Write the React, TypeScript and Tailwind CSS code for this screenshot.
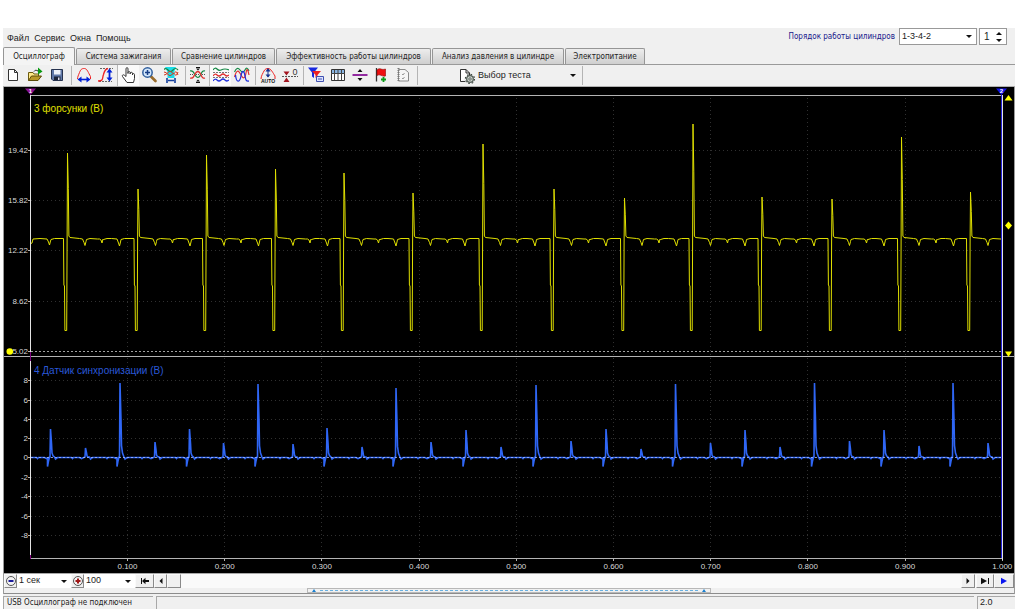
import React from "react";

const SANS = "font-['Liberation_Sans',Arial,sans-serif]";

/* ---------- traces ---------- */

const injectorPulses: [number, number][] = [
  [67.5, 153], [138, 189], [206.5, 155], [275.5, 169], [344, 173], [413, 193], [483, 144],
  [554, 189], [624.5, 198], [693, 124], [762, 197], [832, 199], [901.5, 137], [970.5, 192],
];

const syncPeaks: [number, number][] = [
  [50.5, 429], [85.5, 448], [120, 383], [155, 442], [189.5, 429], [223.5, 443], [258, 384],
  [293, 444], [327, 428], [362, 447], [396, 388], [431, 442], [466, 430], [501, 447],
  [536, 385], [571, 441], [606, 429], [641, 449], [675.5, 384], [710.5, 443], [745, 430],
  [780, 447], [814.5, 383], [849.5, 441], [884, 430], [919, 446], [953, 383], [988, 443],
];

function dip(x: number, y: number) {
  return `L${x - 2.5} 239 L${x - 1} ${y - 3} L${x} ${y} L${x + 1} ${y - 4} L${x + 1.5} 239.5 L${x + 5} 238.5`;
}

function injectorPath() {
  let d = "M31 243.5 L32 243 L33 239 L40 238.5 " + dip(49.5, 245);
  for (const [x, top] of injectorPulses) {
    const mid = top + (238 - top) * 0.42;
    d += ` L${x - 4} 238.5 L${x - 3.6} 285 L${x - 3} 286 L${x - 2.6} 330.5 L${x - 0.8} 330.5`;
    d += ` L${x - 0.4} 242 L${x} ${top} L${x + 0.8} ${mid} L${x + 1.4} 236 L${x + 2.5} 237.5 L${x + 12} 238.5`;
    d += dip(x + 17.5, 245.5);
    if (x < 960) d += `L${x + 30} 239` + dip(x + 34.5, 243) + `L${x + 44} 238.5` + dip(x + 52, 246);
  }
  return d + " L1001 239";
}

function syncPath() {
  let d = "M31 457.5";
  syncPeaks.forEach(([x, top]) => {
    const h = 457.5 - top;
    d += ` L${x - 14} 457.5 L${x - 13} 458.5 L${x - 12} 457.5 L${x - 6} 457.5 L${x - 4} 458.5`;
    if (h > 20) d += ` L${x - 3} 458 L${x - 3} 466.5 L${x - 2} 461 L${x - 1} 457`;
    d += ` L${x - 0.5} 457 L${x} ${top} L${x + 1} ${top + h * 0.5} L${x + 1.5} ${top + h * 0.84} L${x + 2.5} ${top + h * 0.94}`;
    d += ` L${x + 4} 457 L${x + 5} 459 L${x + 7} 457.5`;
  });
  return d + " L1001 457.5";
}

const voltTicks: [number, string][] = [[150, "19.42"], [200.5, "15.82"], [250.5, "12.22"], [301, "8.62"], [351.5, "5.02"]];
const syncTicks: [number, string][] = [
  [380.5, "8"], [400, "6"], [419, "4"], [438.5, "2"], [457.5, "0"], [477, "-2"], [496, "-4"], [516, "-6"], [535, "-8"],
];
const timeTicks = Array.from({ length: 10 }, (_, i) => ({ x: 127.5 + i * 97.2, label: ((i + 1) / 10).toFixed(3) }));

function Scope() {
  return (
    <svg viewBox="4 87 1010 486" className={`block h-auto w-full bg-black ${SANS}`} role="img" aria-label="Осциллограмма">
      <g stroke="#303030" strokeWidth="1" strokeDasharray="1 3" shapeRendering="crispEdges">
        {timeTicks.slice(0, 9).map((t) => (
          <path key={t.label} d={`M${t.x} 98V558`} />
        ))}
        {[...voltTicks.slice(0, 4), ...syncTicks].map(([y, l]) => (
          <path key={l} d={`M31 ${y}H1000`} />
        ))}
      </g>
      <path d="M31 351.5H1001" stroke="#a0a0a0" strokeDasharray="2 2" shapeRendering="crispEdges" />
      <g fill="#d8d8d8" fontSize="8" textAnchor="end">
        {[...voltTicks, ...syncTicks].map(([y, l]) => (
          <text key={l} x="28" y={Math.floor(y) + 3}>{l}</text>
        ))}
      </g>
      <g fill="#d8d8d8" fontSize="8" textAnchor="middle">
        {timeTicks.map((t) => (
          <text key={t.label} x={t.x} y="569">{t.label}</text>
        ))}
      </g>
      <g stroke="#b4b4b4" shapeRendering="crispEdges">
        {[...voltTicks, ...syncTicks].map(([y, l]) => (
          <path key={l} d={`M28 ${y}H31`} />
        ))}
        {timeTicks.map((t) => (
          <path key={t.label} d={`M${t.x} 558V561`} />
        ))}
        <path d="M31 95.5H1002M4 356.5H1014M31 558.5H1002" />
        <path d="M30.5 95V559M1002.5 95V560" stroke="#e4e4e4" />
      </g>
      <path d="M1001.5 95V558" stroke="#2020d8" shapeRendering="crispEdges" />
      <path d="M30.5 352V361M30.5 555V559" stroke="#80007f" shapeRendering="crispEdges" />
      <path d={injectorPath()} fill="none" stroke="#e0e000" strokeWidth="1" />
      <path d={syncPath()} fill="none" stroke="#2f66f5" strokeWidth="1.6" />
      <path d="M31 457.5H1001" stroke="#b8c8ff" strokeWidth="1" strokeDasharray="2 2" opacity=".7" shapeRendering="crispEdges" />
      <path d="M25 88.500H36L30.500 95Z" fill="#8a1090" />
      <path d="M996 88.500H1007L1001.500 95Z" fill="#1414e8" />
      <text x="30.500" y="93" fontSize="6" fontWeight="700" fill="#fff" textAnchor="middle">1</text>
      <text x="1001.500" y="93" fontSize="6" fontWeight="700" fill="#fff" textAnchor="middle">2</text>
      <g fill="#ffff00">
        <path d="M1008.500 95L1012.500 100.500H1004.500Z" />
        <path d="M1008.500 221.500L1012 225.500L1008.500 229.500L1005 225.500Z" />
        <path d="M1005 351.500H1012L1008.500 357Z" />
        <circle cx="9.800" cy="351.500" r="3.300" />
      </g>
      <text x="34" y="112" fontSize="10" fill="#e0e000">3 форсунки (В)</text>
      <text x="34" y="374" fontSize="10" fill="#2a58d8">4 Датчик синхронизации (В)</text>
    </svg>
  );
}

/* ---------- toolbar icons, drawn on a 16 x 16 grid ---------- */

const icons: Record<string, React.ReactNode> = {
  new: <path d="M2.500 2.500H8.500L11.500 5.500V13.500H2.500ZM8.500 2.500V5.500H11.500" fill="#fff" stroke="#333" />,
  open: (
    <>
      <path d="M0.500 13.500V5.500H5L6 7H10.500V9" fill="#ffe98a" stroke="#6b5a10" />
      <path d="M0.500 13.500L3.500 9H13.500L10 13.500Z" fill="#b89828" stroke="#5a4a08" />
      <path d="M6 4.500C7 3 8 3 10 4" stroke="#222" fill="none" />
      <path d="M10 0.500L14.500 4.500L10 7.500Z" fill="#079a10" />
    </>
  ),
  save: (
    <>
      <path d="M1.500 2.500H12.500V13.500H3L1.500 12Z" fill="#6078a8" stroke="#26324e" />
      <path d="M4 3H10.500V7.500H4Z" fill="#eef2fa" />
      <path d="M4 9.500H10.500V13H4Z" fill="#1c2438" />
      <path d="M8 10.500H9.500V13H8Z" fill="#dde" />
    </>
  ),
  period: (
    <>
      <path d="M1.500 12C1.500 10 2.500 8 3.500 5.500C5 1.500 6.500 1.500 8.500 1.500C11 1.500 12.500 6 14.500 9.500V12" fill="none" stroke="#ee2222" />
      <path d="M4 12.500H12" stroke="#0020d8" strokeWidth="1.600" />
      <path d="M1.500 12.500L5.500 9.500V15.500ZM14.500 12.500L10.500 9.500V15.500Z" fill="#0020d8" />
    </>
  ),
  amplitude: (
    <>
      <path d="M2 1.500H15M1 14.500H14" stroke="#666" strokeDasharray="2 1" />
      <path d="M0 14C6 14 4 11 5.500 7.500C6.500 3 8 2 10 1.500" fill="none" stroke="#ee2222" strokeWidth="1.300" />
      <path d="M11.500 4V12" stroke="#0020d8" strokeWidth="1.800" />
      <path d="M11.500 1.500L14.500 5.500H8.500ZM11.500 14.500L14.500 10.500H8.500Z" fill="#0020d8" />
    </>
  ),
  hand: (
    <path
      d="M5 9.500V1.800C5 0.200 7 0.200 7 1.800V6.500V5.500C7 4.300 9.200 4.300 9.200 5.500V7V6.200C9.200 5 11.500 5 11.500 6.200V8V7.500C11.500 6.300 13.500 6.300 13.500 7.500V11.500L12.500 15.500H6L1.500 9.500C0.800 8 2.300 7.300 3.300 8.200Z"
      fill="#fff" stroke="#333"
    />
  ),
  zoom: (
    <>
      <path d="M9 9.500L13.500 14" stroke="#996c2b" strokeWidth="2.700" strokeLinecap="round" />
      <circle cx="5.500" cy="5.500" r="4.700" fill="#d3e7fb" stroke="#315f9d" strokeWidth="1.500" />
      <path d="M3 5.500H8M5.500 3V8" stroke="#173f87" strokeWidth="1.500" />
    </>
  ),
  window: (
    <>
      <path d="M1 0H12L10.500 4V11H3.500V5Z" fill="#18dce8" />
      <path d="M-1 3.500Q1.500 0 4 3T9 3T14 3" fill="none" stroke="#168846" strokeWidth="1.200" />
      <path d="M0 8Q2 8 4 5.500T8 5.500T11 5.500T14 8M0 5Q2 5 4 7.500T8 7.500T11 7.500T14 5" fill="none" stroke="#d33a20" />
      <path d="M3 11V16M11 11V16M4 13.500H10" stroke="#123e9c" strokeWidth="1.600" />
    </>
  ),
  center: (
    <>
      <path d="M0 7.500H16" stroke="#555" strokeDasharray="1 1" />
      <path d="M0 4Q3 3 4.500 7Q8 14 11 7Q12.500 3 15 4" fill="none" stroke="#168846" strokeWidth="1.200" />
      <path d="M0 11Q3 12 4.500 8Q8 1 11 8Q12.500 12 15 11" fill="none" stroke="#e03030" strokeWidth="1.300" />
      <path d="M6 0.500H10M6 15.500H10" stroke="#111" />
      <path d="M6 1.500H10L8 3.500ZM6 14.500H10L8 12.500Z" fill="#111" />
    </>
  ),
  stack: (
    <>
      <path d="M0 3Q2 0 4 2T8 3T12 2T16 3" fill="none" stroke="#168846" strokeWidth="1.200" />
      <path d="M0 5.500H16M0 10.500H16" stroke="#777" strokeDasharray="2 1" />
      <path d="M0 9Q2 6 4 8T8 8T12 8T16 8" fill="none" stroke="#e03030" strokeWidth="1.200" />
      <path d="M0 14Q2 11 4 13T8 13T12 13T16 13" fill="none" stroke="#2030dd" strokeWidth="1.200" />
    </>
  ),
  overlay: (
    <>
      <path d="M0.500 5Q3 -1 6 3T11 3T15 4" fill="none" stroke="#168846" strokeWidth="1.200" />
      <path d="M0.500 10C3 1 5 4 7 8S11 12 12 6S14 3 15 8" fill="none" stroke="#e03030" strokeWidth="1.200" />
      <path d="M1.500 8C2.500 17 6 15 7 9S10 3 11 9S13 14 15 14" fill="none" stroke="#2030dd" strokeWidth="1.300" />
    </>
  ),
  auto: (
    <>
      <path d="M1 12C1 9 3 6 4 4C5 2 6.500 1.500 8 1.500C11 1.500 13 6 15 9V12" fill="none" stroke="#ee2222" />
      <path d="M8 2V10" stroke="#173090" />
      <path d="M8 1L10.500 4.500H5.500ZM8 10.500L10.500 7.500H5.500Z" fill="#173090" />
      <text x="8" y="15.500" fontSize="5" fontWeight="700" textAnchor="middle" fill="#111">AUTO</text>
    </>
  ),
  zero: (
    <>
      <path d="M0 9.500H16" stroke="#555" strokeDasharray="2 1" />
      <path d="M1.500 4.500H7.500L4.500 8.500ZM1.500 15H7.500L4.500 10.500Z" fill="#a31520" />
      <text x="13" y="7.500" fontSize="9" textAnchor="middle" fill="#333">0</text>
    </>
  ),
  filter: (
    <>
      <path d="M0 0.500H10L6 5.500V11L4 9.500V5.500Z" fill="#1828e0" />
      <path d="M4 4H13L9.500 8V12L7.500 10.500V8Z" fill="#ee2020" />
      <path d="M8.500 9.500H15.500V14.500H8.500Z" fill="#dce4ff" stroke="#4050b0" />
      <path d="M10 12H14" stroke="#4050b0" />
    </>
  ),
  table: (
    <>
      <path d="M1.500 2.500H14.500V13.500H1.500Z" fill="#fff" stroke="#333" />
      <path d="M2 3H14V6H2Z" fill="#8ab5e2" />
      <path d="M1 6.500H15M4.500 3V13M8 3V13M11.500 3V13" stroke="#444" />
    </>
  ),
  split: (
    <>
      <path d="M0.500 8H15.500" stroke="#922aa0" strokeWidth="2" />
      <path d="M8 2L10.500 5H5.500ZM8 14L10.500 11H5.500Z" fill="#111" />
    </>
  ),
  flag: (
    <>
      <path d="M2.500 1V14.500" stroke="#333" strokeWidth="1.300" />
      <path d="M3 3C6 0 7 3.500 11.500 2V9C8 10 6 6.500 3 8.500Z" fill="#ee1010" stroke="#8b0808" strokeWidth=".6" />
      <path d="M7 12.500H12M9.500 10V15" stroke="#0b9a18" strokeWidth="1.800" />
    </>
  ),
  report: (
    <>
      <path d="M2.500 2.500H9L12.500 5.500V14H2.500Z" fill="#f6f6f6" stroke="#8a8a8a" />
      <path d="M2.500 1V15" stroke="#777" strokeWidth="2" strokeDasharray="1 1" />
      <path d="M6 7L7 8L8.500 6M6 11L7 12L8.500 10" stroke="#999" fill="none" />
    </>
  ),
  test: (
    <>
      <path d="M1.500 13.500V1.500H7L10.500 5V8M7 1.500V5H10.500M1.500 13.500H6" fill="#fff" stroke="#333" />
      <circle cx="11" cy="11" r="3.300" fill="#cfd6cf" stroke="#56605a" strokeWidth="1.300" />
      <circle cx="11" cy="11" r="4.600" fill="none" stroke="#3c463f" strokeWidth="1.200" strokeDasharray="1.600 2.010" />
      <circle cx="11" cy="11" r="1.200" fill="#fff" stroke="#56605a" />
    </>
  ),
};

function Icon({ name }: { name: string }) {
  return (
    <svg viewBox="0 0 16 16" className={`size-4 shrink-0 ${SANS}`} aria-hidden="true">
      {icons[name]}
    </svg>
  );
}

const toolGroups: { name: string; label: string; pressed?: boolean }[][] = [
  [{ name: "new", label: "Новый" }, { name: "open", label: "Открыть" }, { name: "save", label: "Сохранить" }],
  [
    { name: "period", label: "Период" }, { name: "amplitude", label: "Амплитуда" },
    { name: "hand", label: "Перемещение", pressed: true }, { name: "zoom", label: "Увеличить" },
    { name: "window", label: "Показать всё" },
  ],
  [{ name: "center", label: "Центрировать" }, { name: "stack", label: "Раздельно", pressed: true }, { name: "overlay", label: "Совместно" }],
  [{ name: "auto", label: "Авто" }, { name: "zero", label: "Ноль" }],
  [
    { name: "filter", label: "Фильтр" }, { name: "table", label: "Таблица" }, { name: "split", label: "Разделитель" },
    { name: "flag", label: "Метка" }, { name: "report", label: "Отчёт" },
  ],
];

function Separator() {
  return (
    <span className="flex w-1 justify-center py-px">
      <span className="w-px bg-[#b4b4b4]" />
    </span>
  );
}

function Toolbar() {
  return (
    <div className="flex h-[23px] border-y border-t-[#9a9a9a] border-b-[#b0b0b0] bg-[#f0f0f0]">
      {toolGroups.map((group, i) => (
        <div key={i} className="flex">
          {group.map((t) => (
            <button
              key={t.name}
              aria-label={t.label}
              aria-pressed={!!t.pressed}
              className={`flex w-[22px] items-center justify-center pb-px ${t.pressed ? "border-l border-[#b8b8b8] bg-[#fafafa]" : ""}`}
            >
              <Icon name={t.name} />
            </button>
          ))}
          <Separator />
        </div>
      ))}
      <button className="ml-10 flex w-[121px] items-center gap-[3px] text-[9px] text-[#222]">
        <Icon name="test" />
        Выбор теста
        <Arrow className="mr-1 ml-auto" />
      </button>
      <Separator />
    </div>
  );
}

function Arrow({ className = "" }: { className?: string }) {
  return (
    <svg viewBox="0 0 6 3" className={`h-[3px] w-1.5 shrink-0 ${className}`} aria-hidden="true">
      <path d="M0 0H6L3 3Z" fill="#111" />
    </svg>
  );
}

function Combo({ id, label, value, className }: { id: string; label: string; value: string; className: string }) {
  return (
    <div className={`relative flex items-center bg-white ${className}`}>
      <select id={id} aria-label={label} className="size-full appearance-none pl-0.5 text-[#222]">
        <option>{value}</option>
      </select>
      <Arrow className="pointer-events-none absolute right-1" />
    </div>
  );
}

const tabs = [
  { label: "Осциллограф", width: "w-[72px]" },
  { label: "Система зажигания", width: "w-[95px]" },
  { label: "Сравнение цилиндров", width: "w-[103px]" },
  { label: "Эффективность работы цилиндров", width: "w-[155px]" },
  { label: "Анализ давления в цилиндре", width: "w-[132px]" },
  { label: "Электропитание", width: "w-[80px]" },
];

const ctl = "flex h-[14px] shrink-0 items-center justify-center border border-t-[#fafafa] border-l-[#fafafa] border-r-[#8a8a8a] border-b-[#8a8a8a] bg-[#f0f0f0]";

function Glyph({ d, fill = "#111" }: { d: string; fill?: string }) {
  return (
    <svg viewBox="0 0 10 8" className="h-2 w-2.5 shrink-0" aria-hidden="true">
      <path d={d} fill={fill} />
    </svg>
  );
}

function RoundSign({ color, d }: { color: string; d: string }) {
  return (
    <svg viewBox="0 0 12 12" className="size-3 shrink-0" aria-hidden="true">
      <circle cx="6" cy="6" r="4.500" fill="#f4f4f4" stroke="#555" />
      <path d={d} stroke={color} strokeWidth="2" />
    </svg>
  );
}

function Playback() {
  return (
    <div className="flex h-[15px] items-start border-t border-[#a8a8a8] bg-[#fafafa]">
      <button aria-label="Уменьшить" className={`${ctl} w-[13px]`}><RoundSign color="#1c1c9c" d="M3.500 6H8.500" /></button>
      <Combo id="sweep" label="Развёртка" value="1 сек" className="h-[14px] w-[54px] text-[9px]" />
      <button aria-label="Увеличить" className={`${ctl} w-[13px]`}><RoundSign color="#a01818" d="M3.500 6H8.500M6 3.500V8.500" /></button>
      <Combo id="scale" label="Масштаб" value="100" className="h-[14px] w-[51px] text-[9px]" />
      <button aria-label="В начало" className={`${ctl} w-[19px]`}><Glyph d="M1 1H2V7H1ZM5.500 0.800V3H9V5H5.500V7.200L2 4Z" /></button>
      <button aria-label="Назад" className={`${ctl} w-[13px]`}><Glyph d="M6.500 1V7L3.500 4Z" /></button>
      <button aria-label="Позиция" className={`${ctl} w-[14px]`} />
      <span className="flex-1" />
      <button aria-label="Вперёд" className={`${ctl} w-[14px]`}><Glyph d="M3.500 1V7L6.500 4Z" /></button>
      <button aria-label="В конец" className={`${ctl} ml-px w-[18px]`}><Glyph d="M1 0.800L7 4L1 7.200ZM8 1H9V7H8Z" /></button>
      <button aria-label="Пуск" className={`${ctl} w-[20px]`}><Glyph d="M2 0.800L8 4L2 7.200Z" fill="#0a16f0" /></button>
    </div>
  );
}

export default function App() {
  return (
    <div className={`min-h-screen bg-white pt-7 pr-[9px] pl-[3px] ${SANS}`}>
      <main className="bg-[#f0f0f0] text-[9px] text-[#222]">
        <div className="mr-px flex h-5 items-start justify-between">
          <nav className="flex h-5 items-center gap-[5px] pt-0.5 pl-1">
            {["Файл", "Сервис", "Окна", "Помощь"].map((m) => (
              <button key={m}>{m}</button>
            ))}
          </nav>
          <div className="flex items-center pr-[7px]">
            <label htmlFor="order" className="mr-1 font-['DejaVu_Sans_Condensed','DejaVu_Sans',sans-serif] text-[8px] text-[#16168a]">Порядок работы цилиндров</label>
            <Combo id="order" label="Порядок работы цилиндров" value="1-3-4-2" className="h-[17px] w-[78px] border border-[#999] text-[9px]" />
            <div className="ml-0.5 flex h-[17px] w-[28px] items-center border border-[#999] bg-white">
              <input aria-label="Номер цилиндра" defaultValue="1" className="w-4 pl-1 text-[10px]" />
              <span className="flex flex-col gap-1">
                <button aria-label="Больше"><Arrow className="block rotate-180" /></button>
                <button aria-label="Меньше"><Arrow className="block" /></button>
              </span>
            </div>
          </div>
        </div>

        <div className="-mt-px flex h-[17px] items-end gap-px font-['DejaVu_Sans_Condensed','DejaVu_Sans',sans-serif] text-[8px]" role="tablist">
          {tabs.map((t, i) => (
            <button
              key={t.label}
              role="tab"
              aria-selected={i === 0}
              className={`shrink-0 rounded-t-[2px] border border-b-0 border-[#969696] whitespace-nowrap ${t.width} ${
                i === 0 ? "-mb-px h-[18px] bg-[#f4f4f4]" : "h-4 bg-linear-to-b from-[#ededed] to-[#cfcfcf]"
              }`}
            >
              {t.label}
            </button>
          ))}
        </div>

        <Toolbar />

        <div className="border-x border-[#9a9a9a]">
          <Scope />
          <Playback />
          <div className="flex h-1.5 justify-center border-b border-[#8c8c8c]">
            <button aria-label="Свернуть панель" className="flex w-2/5 items-center justify-between border border-[#b8b8b8] px-1">
              <svg viewBox="0 0 4 3" className="h-[3px] w-1"><path d="M2 0L4 3H0Z" fill="#1a80d0" /></svg>
              <span className="mx-1 flex-1 border-t border-dashed border-[#69b0e0]" />
              <svg viewBox="0 0 4 3" className="h-[3px] w-1"><path d="M2 0L4 3H0Z" fill="#1a80d0" /></svg>
            </button>
          </div>
        </div>

        <footer className="flex h-[15px] gap-[3px] pt-0.5">
          <span className="flex w-[150px] items-center border-t border-l border-[#a8a8a8] pl-[3px] font-['DejaVu_Sans_Condensed','DejaVu_Sans',sans-serif] text-[8px] whitespace-nowrap">USB Осциллограф не подключен</span>
          <span className="flex-1 border-t border-l border-[#a8a8a8]" />
          <span className="flex w-[38px] items-center border-t border-l border-[#a8a8a8] pl-0.5">2.0</span>
        </footer>
      </main>
    </div>
  );
}
